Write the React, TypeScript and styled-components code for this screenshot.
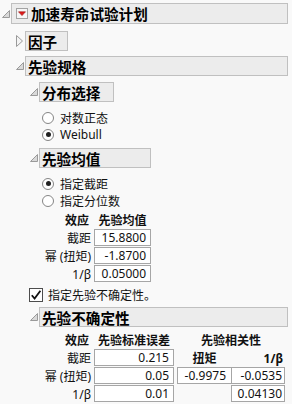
import React from 'react';
import styled, { createGlobalStyle } from 'styled-components';

const GlobalStyle = createGlobalStyle`
  html, body {
    margin: 0;
    padding: 0;
    background: #f9f9f9;
  }
  body {
    font-family: "Noto Sans", "Noto Sans CJK SC", sans-serif;
    font-size: 12px;
    color: #111;
  }
`;

const Page = styled.div`
  width: 292px;
  height: 404px;
  box-sizing: border-box;
  padding-top: 3px;
  overflow: hidden;
`;

const Node = styled.div`
  display: grid;
  grid-template-columns: 11px auto;
  width: fit-content;
`;

const Toggle = styled.div`
  display: flex;
  align-items: center;
  padding-left: 2px;
`;

const Header = styled.div<{ $tall?: boolean }>`
  display: flex;
  align-items: center;
  gap: 3px;
  height: ${({ $tall }) => ($tall ? 21 : 20)}px;
  box-sizing: border-box;
  padding: 0 10px 0 ${({ $tall }) => ($tall ? 4 : 2)}px;
  background: #ececec;
  border: 1px solid #c0c0c0;
  font-family: "Noto Sans CJK SC", sans-serif;
  font-size: 14.6px;
  font-weight: 700;
  color: #000;
  white-space: nowrap;
`;

const Content = styled.div<{ $top: number; $gap?: number }>`
  grid-column: 2;
  display: flex;
  flex-direction: column;
  align-items: flex-start;
  gap: ${({ $gap }) => $gap ?? 5}px;
  padding: ${({ $top }) => $top}px 0 0 3px;
`;

const RadioGroup = styled.div`
  display: flex;
  flex-direction: column;
  padding-right: 6px;
`;

const RadioRow = styled.label`
  display: flex;
  align-items: center;
  gap: 6px;
  height: 17px;
  white-space: nowrap;
`;

const RadioCircle = styled.span<{ $checked?: boolean }>`
  position: relative;
  flex: none;
  width: 12px;
  height: 12px;
  box-sizing: border-box;
  border-radius: 50%;
  border: 1px solid #858585;
  background: #fff;

  &::after {
    content: '';
    display: ${({ $checked }) => ($checked ? 'block' : 'none')};
    position: absolute;
    inset: 2.5px;
    border-radius: 50%;
    background: #222;
  }
`;

const MeanTable = styled.div`
  display: grid;
  grid-template-columns: 49px 57px;
  grid-auto-rows: 18px;
  column-gap: 3px;
  margin-top: 2px;
`;

const UncertTable = styled.div`
  display: grid;
  grid-template-columns: 49px 80px 108px;
  grid-template-rows: repeat(4, 18px);
  column-gap: 3px;
  margin-right: 3px;
`;

const Column = styled.div`
  display: grid;
  grid-auto-rows: 18px;
`;

const CorrGrid = styled.div`
  grid-column: 3;
  grid-row: 1 / 5;
  display: grid;
  grid-template-columns: 55px 53px;
  grid-auto-rows: 18px;
`;

const HeadCell = styled.div<{ $align?: string; $span?: number }>`
  display: flex;
  align-items: center;
  justify-content: ${({ $align }) => $align ?? 'center'};
  grid-column: ${({ $span }) => ($span ? `span ${$span}` : 'auto')};
  padding-right: ${({ $align }) => ($align === 'flex-end' ? 2 : 0)}px;
  font-weight: 700;
  white-space: nowrap;
`;

const LabelCell = styled.div`
  display: flex;
  align-items: center;
  justify-content: flex-end;
  white-space: nowrap;
`;

const ValueBox = styled.div<{ $joined?: boolean; $pad?: number }>`
  height: 17px;
  box-sizing: border-box;
  margin-left: ${({ $joined }) => ($joined ? -1 : 0)}px;
  padding-right: ${({ $pad }) => $pad ?? 4}px;
  border: 1px solid #a6a6a6;
  background: #fff;
  font-family: "Noto Sans", sans-serif;
  font-size: 12px;
  line-height: 15px;
  text-align: right;
  white-space: nowrap;
`;

const CheckRow = styled.label`
  display: flex;
  align-items: center;
  gap: 5px;
  height: 14px;
  margin-left: 1px;
  white-space: nowrap;
`;

const CheckBox = styled.span`
  display: flex;
  align-items: center;
  justify-content: center;
  flex: none;
  width: 14px;
  height: 14px;
  box-sizing: border-box;
  border: 1px solid #4d4d4d;
  background: #fff;
`;

const OpenIcon = () => (
  <svg width="8" height="8" viewBox="0 0 8 8">
    <path d="M7.5 0.5 L7.5 7.5 L0.5 7.5 Z" fill="#d9d9d9" stroke="#9a9a9a" strokeWidth="1" />
  </svg>
);

const ClosedIcon = () => (
  <svg width="7" height="12" viewBox="0 0 7 12">
    <path d="M0.5 0.5 L6.5 6 L0.5 11.5 Z" fill="#f4f4f4" stroke="#9a9a9a" strokeWidth="1" />
  </svg>
);

const MenuIcon = () => (
  <svg width="12" height="11" viewBox="0 0 12 11">
    <rect x="0.5" y="0.5" width="11" height="10" fill="#f6f6f6" stroke="#a3a3a3" />
    <path d="M2.5 3.8 L9.5 3.8 L6 7.6 Z" fill="#e01818" stroke="#9a1010" strokeWidth="0.6" />
  </svg>
);

const Radio = ({ label, checked }: { label: string; checked?: boolean }) => (
  <RadioRow>
    <RadioCircle $checked={checked} />
    <span>{label}</span>
  </RadioRow>
);

type OutlineProps = {
  title: string;
  open?: boolean;
  tall?: boolean;
  menu?: boolean;
  top?: number;
  gap?: number;
  children?: React.ReactNode;
};

const Outline = ({ title, open = true, tall, menu, top = 6, gap, children }: OutlineProps) => (
  <Node>
    <Toggle>{open ? <OpenIcon /> : <ClosedIcon />}</Toggle>
    <Header $tall={tall}>
      {menu && <MenuIcon />}
      {title}
    </Header>
    {open && children && (
      <Content $top={top} $gap={gap}>
        {children}
      </Content>
    )}
  </Node>
);

const App = () => (
  <>
    <GlobalStyle />
    <Page>
      <Outline title="加速寿命试验计划" tall menu top={7}>
        <Outline title="因子" open={false} />
        <Outline title="先验规格" top={6}>
          <Outline title="分布选择" top={7}>
            <RadioGroup>
              <Radio label="对数正态" />
              <Radio label="Weibull" checked />
            </RadioGroup>
          </Outline>
          <Outline title="先验均值" top={7} gap={0}>
            <RadioGroup>
              <Radio label="指定截距" checked />
              <Radio label="指定分位数" />
            </RadioGroup>
            <MeanTable>
              <HeadCell $align="flex-end">效应</HeadCell>
              <HeadCell>先验均值</HeadCell>
              <LabelCell>截距</LabelCell>
              <ValueBox>15.8800</ValueBox>
              <LabelCell>幂 (扭矩)</LabelCell>
              <ValueBox>-1.8700</ValueBox>
              <LabelCell>1/β</LabelCell>
              <ValueBox>0.05000</ValueBox>
            </MeanTable>
          </Outline>
          <CheckRow>
            <CheckBox>
              <svg width="12" height="12" viewBox="0 0 12 12">
                <path d="M1.8 6.2 L4.6 9.6 L10.4 1.8" fill="none" stroke="#111" strokeWidth="1.8" />
              </svg>
            </CheckBox>
            <span>指定先验不确定性。</span>
          </CheckRow>
          <Outline title="先验不确定性" top={4}>
            <UncertTable>
              <Column>
                <HeadCell $align="flex-end">效应</HeadCell>
                <LabelCell>截距</LabelCell>
                <LabelCell>幂 (扭矩)</LabelCell>
                <LabelCell>1/β</LabelCell>
              </Column>
              <Column>
                <HeadCell>先验标准误差</HeadCell>
                <ValueBox>0.215</ValueBox>
                <ValueBox>0.05</ValueBox>
                <ValueBox>0.01</ValueBox>
              </Column>
              <CorrGrid>
                <HeadCell $span={2}>先验相关性</HeadCell>
                <HeadCell>扭矩</HeadCell>
                <HeadCell $align="flex-end">1/β</HeadCell>
                <ValueBox $pad={5}>-0.9975</ValueBox>
                <ValueBox $joined $pad={2}>-0.0535</ValueBox>
                <span />
                <ValueBox $joined $pad={2}>0.04130</ValueBox>
              </CorrGrid>
            </UncertTable>
          </Outline>
        </Outline>
      </Outline>
    </Page>
  </>
);

export default App;
